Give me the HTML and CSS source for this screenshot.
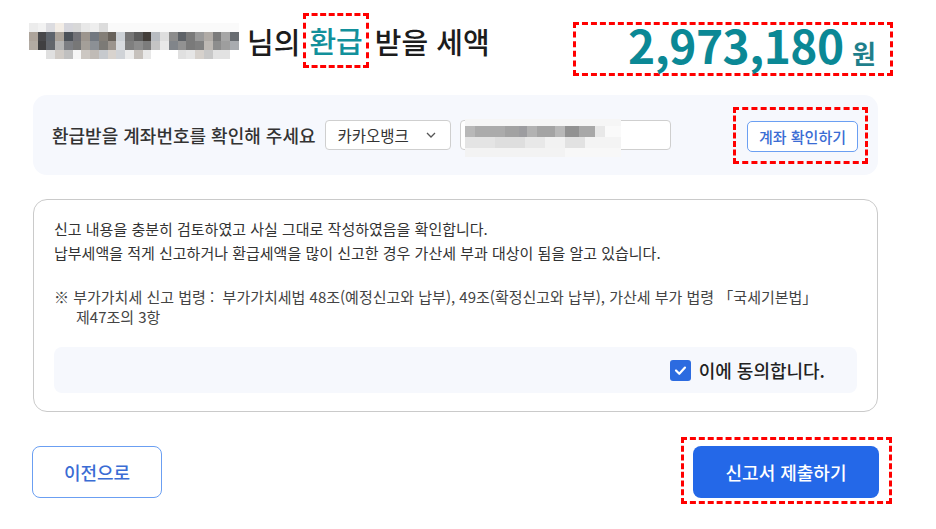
FILE: index.html
```html
<!DOCTYPE html>
<html lang="ko">
<head>
    <meta charset="UTF-8">
    <meta name="viewport" content="width=device-width, initial-scale=1.0">
    <title>부가가치세 신고 - 환급 세액</title>
    <link rel="stylesheet" href="styles.css">
</head>
<body>
    <div class="page">
        <!-- 환급 세액 -->
        <div class="title-row">
            <h1 class="title">
                <span class="name-blur"></span>
                <span>님의</span>
                <span class="mark refund">환급</span>
                <span>받을 세액</span>
            </h1>
            <div class="mark amount-box">
                <span class="amount">2,973,180</span>
                <span class="won">원</span>
            </div>
        </div>

        <!-- 계좌 확인 -->
        <div class="account-panel">
            <span class="account-label">환급받을 계좌번호를 확인해 주세요</span>
            <div class="bank-select">
                <span>카카오뱅크</span>
                <svg width="10" height="6" viewBox="0 0 10 6"><polyline points="1,1 5,5 9,1" fill="none" stroke="#555" stroke-width="1.3"/></svg>
            </div>
            <div class="account-input"><span class="acct-blur"></span></div>
            <div class="mark check-wrap">
                <button class="btn-outline btn-check">계좌 확인하기</button>
            </div>
        </div>

        <!-- 동의 -->
        <div class="confirm-panel">
            <p class="confirm-text">
                신고 내용을 충분히 검토하였고 사실 그대로 작성하였음을 확인합니다.<br>
                납부세액을 적게 신고하거나 환급세액을 많이 신고한 경우 가산세 부과 대상이 됨을 알고 있습니다.
            </p>
            <p class="law-note">
                ※ 부가가치세 신고 법령 :&nbsp; 부가가치세법 48조(예정신고와 납부), 49조(확정신고와 납부), 가산세 부가 법령 「국세기본법」<br>
                제47조의 3항
            </p>
            <div class="agree-box">
                <label class="agree">
                    <span class="checkbox">
                        <svg width="21" height="21" viewBox="0 0 21 21"><polyline points="6,10.5 9.3,13.8 15,7.6" fill="none" stroke="#fff" stroke-width="2.2" stroke-linecap="round" stroke-linejoin="round"/></svg>
                    </span>
                    이에 동의합니다.
                </label>
            </div>
        </div>

        <div class="button-row">
            <button class="btn-outline btn-prev">이전으로</button>
            <div class="mark submit-wrap">
                <button class="btn-primary">신고서 제출하기</button>
            </div>
        </div>
    </div>
</body>
</html>
```

FILE: styles.css
```css
body {
    margin: 0;
    font-family: "Noto Sans CJK KR", "Noto Sans", sans-serif;
    color: #222;
    background: #fff;
}
.page {
    padding: 13px 58px 0 33px;
}
.mark {
    border: 3px dashed #f00;
}

/* 제목 */
.title-row {
    display: flex;
    justify-content: space-between;
    align-items: flex-start;
    margin-right: -15px;
}
.title {
    display: flex;
    align-items: center;
    height: 55px;
    margin: 0;
    font-size: 29px;
    font-weight: 500;
    color: #1c1c1c;
}
.name-blur {
    width: 210px;
    height: 36px;
    margin: 0 8px 0 -4px;
    background:
        linear-gradient(90deg, #ececec 0 9px, #f2f2f2 9px 17px, #dcdce0 17px 26px, #f3ede6 26px 35px, #d6d6dc 35px 44px, #d8d8d8 44px 52px, #e8e8e8 52px 61px, #eeeeee 61px 70px, #dcdcdc 70px 79px, #fafafa 79px 210px) 0 0 / 100% 9px no-repeat,
        linear-gradient(90deg, #ada49b 0 9px, #48484b 9px 17px, #5e646c 17px 26px, #aaa299 26px 35px, #4c5158 35px 44px, #727277 44px 52px, #9c958e 52px 61px, #727880 61px 70px, #837e77 70px 79px, #68625b 79px 87px, #ccd1d6 87px 96px, #767676 96px 105px, #5c5c5c 105px 114px, #433e3a 114px 122px, #b8bcc1 122px 131px, #dedede 131px 140px, #8c8c8c 140px 149px, #5e6267 149px 157px, #7a7a7a 157px 166px, #9a9a9a 166px 175px, #b0aba6 175px 184px, #7b7b7b 184px 192px, #a6a6a6 192px 201px, #686c71 201px 210px) 0 9px / 100% 9px no-repeat,
        linear-gradient(90deg, #b2aba3 0 9px, #404042 9px 17px, #62666c 17px 26px, #b4b4b4 26px 35px, #7c7e83 35px 44px, #777777 44px 52px, #a49f99 52px 61px, #8c9095 61px 70px, #7c7a76 70px 79px, #9c958e 79px 87px, #d8dbdf 87px 96px, #7f7f7f 96px 105px, #8c8c8c 105px 114px, #7c7c7c 114px 122px, #c4c4c4 122px 131px, #e8e8e8 131px 140px, #81858a 140px 149px, #929292 149px 157px, #7a7a7a 157px 166px, #808080 166px 175px, #bdb8b3 175px 184px, #8d8d8d 184px 192px, #9e9e9e 192px 201px, #a9acb0 201px 210px) 0 18px / 100% 9px no-repeat,
        linear-gradient(90deg, #ffffff 0 17px, #e0e0e0 17px 26px, #d0cbc6 26px 35px, #c0c0c0 35px 44px, #f6f6f6 44px 52px, #ccc7c2 52px 61px, #c0bbb6 61px 70px, #c6c9cd 70px 79px, #d8d3ce 79px 87px, #d0d3d7 87px 96px, #ececec 96px 105px, #c6c1bc 105px 114px, #e8e8e8 114px 122px, #ffffff 122px 149px, #e0e0e0 149px 157px, #e6e6e6 157px 166px, #d6d1cc 166px 175px, #c8c8c8 175px 184px, #e2e2e2 184px 201px, #ffffff 201px 210px) 0 27px / 100% 9px no-repeat;
}
.refund {
    margin: 0 6px 0 3px;
    padding: 0 3px;
    line-height: 49px;
    color: #12909b;
}
.amount-box {
    box-sizing: border-box;
    width: 320px;
    height: 54px;
    margin-top: 9px;
    padding-right: 14px;
    text-align: right;
    line-height: 38px;
    color: #0b8895;
    font-weight: 700;
}
.amount {
    font-size: 46px;
    letter-spacing: -0.5px;
}
.won {
    margin-left: 4px;
    font-size: 26px;
    color: #1f7f8b;
}

/* 계좌 */
.account-panel {
    display: flex;
    align-items: center;
    gap: 9px;
    height: 80px;
    margin-top: 19px;
    padding: 0 10px 0 19px;
    background: #f6f8fd;
    border-radius: 14px;
}
.account-label {
    font-size: 18px;
    font-weight: 500;
    color: #333;
}
.bank-select {
    box-sizing: border-box;
    display: flex;
    align-items: center;
    justify-content: space-between;
    width: 126px;
    height: 30px;
    padding: 0 14px 0 12px;
    background: #fff;
    border: 1px solid #cfcfcf;
    border-radius: 4px;
    font-size: 15.5px;
    color: #333;
}
.account-input {
    position: relative;
    box-sizing: border-box;
    width: 211px;
    height: 30px;
    background: #fff;
    border: 1px solid #cfcfcf;
    border-radius: 4px;
}
.acct-blur {
    position: absolute;
    left: 4px;
    top: -2px;
    width: 156px;
    height: 38px;
    background:
        linear-gradient(90deg, #f6f6f6 0 156px) 0 0 / 100% 7px no-repeat,
        linear-gradient(90deg, #b8b8b8 0 10px, #ababab 10px 40px, #a2a2a2 40px 54px, #9d9da0 54px 62px, #b2b2b2 62px 72px, #a4a4a4 72px 90px, #b8b8b8 90px 100px, #929292 100px 114px, #a8a8a8 114px 130px, #e8e8e8 130px 140px, #fafafa 140px 156px) 0 7px / 100% 11px no-repeat,
        linear-gradient(90deg, #e4e4e4 0 30px, #dedede 30px 60px, #e8e8e8 60px 80px, #f2f2f2 80px 100px, #e2e2e2 100px 120px, #f4f4f4 120px 156px) 0 18px / 100% 11px no-repeat,
        linear-gradient(90deg, #f3f3f3 0 100px, #f8f8f8 100px 156px) 0 29px / 100% 9px no-repeat;
}
.check-wrap {
    margin-left: auto;
    padding: 11px 7px 9px 11px;
}
.btn-outline {
    font-family: inherit;
    background: #fff;
    border: 1.5px solid #6b9ff2;
    color: #3a6cd4;
    cursor: pointer;
}
.btn-check {
    display: block;
    width: 111px;
    height: 31px;
    padding: 0;
    border-radius: 5px;
    font-size: 15px;
    font-weight: 500;
}

/* 동의 */
.confirm-panel {
    margin-top: 24px;
    padding: 17px 20px 18px;
    border: 1px solid #cacaca;
    border-radius: 14px;
}
.confirm-text {
    margin: 0;
    font-size: 15px;
    line-height: 24px;
    color: #333;
}
.law-note {
    margin: 22px 0 0;
    padding-left: 22px;
    text-indent: -22px;
    font-size: 15px;
    line-height: 20px;
    color: #444;
}
.agree-box {
    display: flex;
    align-items: center;
    justify-content: flex-end;
    height: 46px;
    margin-top: 20px;
    padding-right: 32px;
    background: #f6f8fd;
    border-radius: 8px;
}
.agree {
    display: flex;
    align-items: center;
    gap: 8px;
    font-size: 18px;
    font-weight: 500;
    color: #222;
}
.checkbox {
    display: flex;
    width: 21px;
    height: 21px;
    background: #2c6be0;
    border-radius: 3px;
}

/* 하단 버튼 */
.button-row {
    display: flex;
    justify-content: space-between;
    align-items: flex-start;
    margin: 25px -14px 0 -1px;
}
.btn-prev {
    width: 130px;
    height: 52px;
    margin-top: 9px;
    border-radius: 8px;
    font-size: 18px;
    font-weight: 500;
}
.submit-wrap {
    padding: 6px 10px 3px 9px;
}
.btn-primary {
    display: block;
    width: 186px;
    height: 52px;
    border: none;
    border-radius: 8px;
    background: #2468e8;
    color: #fff;
    font-family: inherit;
    font-size: 18px;
    font-weight: 500;
    cursor: pointer;
}
```
